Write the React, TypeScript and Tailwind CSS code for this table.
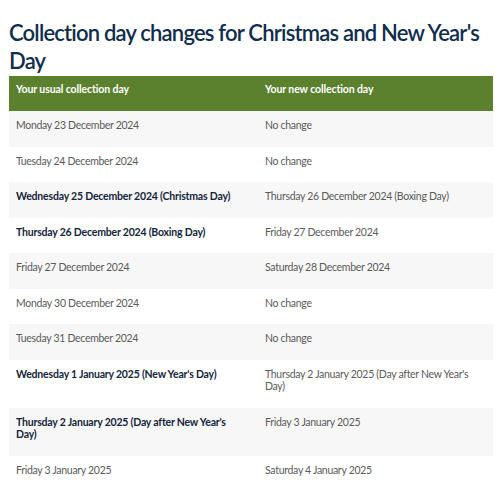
import React from 'react';

interface Row {
  usual: string;
  next: string;
  holiday?: boolean;
}

const rows: Row[] = [
  { usual: 'Monday 23 December 2024', next: 'No change' },
  { usual: 'Tuesday 24 December 2024', next: 'No change' },
  { usual: 'Wednesday 25 December 2024 (Christmas Day)', next: 'Thursday 26 December 2024 (Boxing Day)', holiday: true },
  { usual: 'Thursday 26 December 2024 (Boxing Day)', next: 'Friday 27 December 2024', holiday: true },
  { usual: 'Friday 27 December 2024', next: 'Saturday 28 December 2024' },
  { usual: 'Monday 30 December 2024', next: 'No change' },
  { usual: 'Tuesday 31 December 2024', next: 'No change' },
  { usual: 'Wednesday 1 January 2025 (New Year\'s Day)', next: 'Thursday 2 January 2025 (Day after New Year\'s Day)', holiday: true },
  { usual: 'Thursday 2 January 2025 (Day after New Year\'s Day)', next: 'Friday 3 January 2025', holiday: true },
  { usual: 'Friday 3 January 2025', next: 'Saturday 4 January 2025' },
];

export default function App() {
  return (
    <div className="min-h-screen bg-white px-[9px] pt-[19px]" style={{ fontFamily: 'Lato, "Open Sans", sans-serif' }}>
      {/* Heading */}
      <h1 className="text-[22px] leading-[28px] font-semibold text-[#0f2d4c] tracking-[-0.8px]">
        Collection day changes for Christmas and New Year's Day
      </h1>

      {/* Table */}
      <table className="mt-[1px] w-[484px] table-fixed border-collapse text-[10.5px] leading-[12.5px] tracking-[-0.3px]">
        <thead>
          <tr className="bg-[#5b812e] text-white">
            <th className="w-[249px] h-[35px] pl-[7px] pt-[7px] text-left align-top font-bold tracking-[-0.1px]">Your usual collection day</th>
            <th className="pl-[7px] pt-[7px] text-left align-top font-bold tracking-[-0.1px]">Your new collection day</th>
          </tr>
        </thead>
        <tbody>
          {rows.map((row, i) => (
            <tr key={i} className={i % 2 === 0 ? 'bg-[#f7f7f7]' : 'bg-white'}>
              <td className={`align-top pl-[7px] pr-[20px] pt-[8px] pb-[15px] ${row.holiday ? 'font-bold tracking-[-0.2px] text-[#14253a]' : 'text-[#5a5a5a]'}`}>
                {row.usual}
              </td>
              <td className="align-top pl-[7px] pr-[16px] pt-[8px] pb-[15px] text-[#5a5a5a]">{row.next}</td>
            </tr>
          ))}
        </tbody>
      </table>
    </div>
  );
}
